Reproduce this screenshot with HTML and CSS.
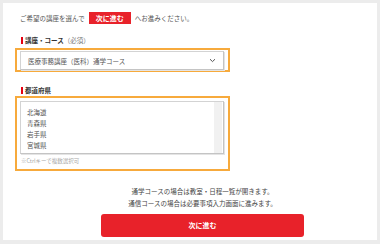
FILE: index.html
```html
<!DOCTYPE html>
<html>
    <head>
        <title>講座選択</title>
        <link rel="stylesheet" href="styles.css">
    </head>
    <body>
        <div class="panel">
            <p class="intro">
                <span>ご希望の講座を選んで</span>
                <span class="mini-btn">次に進む</span>
                <span>へお進みください。</span>
            </p>

            <h2 class="label">講座・コース<span class="req">（必須）</span></h2>
            <div class="field field-course">
                <div class="select">
                    <span>医療事務講座（医科）通学コース</span>
                    <svg class="chevron" width="7" height="5" viewBox="0 0 7 5">
                        <path d="M1 1.2 L3.5 3.6 L6 1.2" fill="none" stroke="#555" stroke-width="1"/>
                    </svg>
                </div>
            </div>

            <h2 class="label label-pref">都道府県</h2>
            <div class="field field-pref">
                <div class="listbox">
                    <ul class="options">
                        <li>北海道</li>
                        <li>青森県</li>
                        <li>岩手県</li>
                        <li>宮城県</li>
                    </ul>
                    <div class="track"></div>
                </div>
                <p class="note">※Ctrlキーで複数選択可</p>
            </div>

            <div class="submit">
                <p class="info">
                    通学コースの場合は教室・日程一覧が開きます。<br>
                    通信コースの場合は必要事項入力画面に進みます。
                </p>
                <div class="next-btn">次に進む</div>
            </div>
        </div>
    </body>
</html>
```

FILE: styles.css
```css
body {
    margin: 0;
    padding: 3px;
    background: #ececec;
    font-family: "Noto Sans CJK JP", "Noto Sans", sans-serif;
    color: #444;
}
.panel {
    background: #fff;
    width: 374px;
    height: 237px;
    padding-left: 12px;
    box-sizing: border-box;
    overflow: hidden;
}
.intro {
    display: flex;
    align-items: center;
    gap: 4px;
    margin: 0;
    padding-top: 9px;
    padding-left: 5px;
    font-size: 6.5px;
    line-height: 12px;
    color: #555;
}
.mini-btn {
    display: block;
    height: 12px;
    padding: 0 7px;
    background: #e8222a;
    color: #fff;
    font-weight: bold;
    font-size: 7px;
    line-height: 12px;
}
.label {
    display: flex;
    align-items: center;
    margin: 12px 0 0 6px;
    height: 8px;
    font-size: 6.5px;
    font-weight: bold;
    color: #333;
    line-height: 8px;
}
.label::before {
    content: "";
    display: block;
    width: 2px;
    height: 7px;
    margin-right: 2px;
    background: #e60012;
}
.req {
    font-weight: normal;
    color: #777;
}
.label-pref {
    margin-top: 14px;
}
.field {
    width: 215px;
    border: 2px solid #f7aa3c;
    box-sizing: border-box;
}
.field-course {
    margin-top: 4px;
    height: 24px;
    padding: 1px 4px 0 3px;
}
.select {
    display: flex;
    align-items: center;
    justify-content: space-between;
    height: 19px;
    box-sizing: border-box;
    padding: 0 7px 0 7px;
    border: 1px solid #d3d3d3;
    border-right-color: #c4c4c4;
    border-bottom-color: #c4c4c4;
    box-shadow: 1px 1px 0 #e4e4e4;
    font-size: 6.5px;
    color: #555;
}
.chevron {
    display: block;
}
.field-pref {
    margin-top: 2px;
    height: 75px;
    padding: 3px 4px 0 3px;
}
.listbox {
    display: flex;
    height: 53px;
    box-sizing: border-box;
    border: 1px solid #d3d3d3;
    border-right-color: #c4c4c4;
    border-bottom-color: #c4c4c4;
    box-shadow: 1px 1px 0 #e4e4e4;
}
.options {
    flex: 1;
    list-style: none;
    margin: 0;
    padding: 5px 0 0 6px;
    font-size: 6.5px;
    line-height: 11px;
    color: #555;
}
.track {
    width: 8px;
    margin-right: 1px;
    background: #f1f1f1;
}
.note {
    margin: 3px 0 0 1px;
    font-size: 5.5px;
    line-height: 8px;
    color: #aaa;
}
.submit {
    width: 203px;
    margin: 14px 0 0 86px;
    text-align: center;
}
.info {
    margin: 0;
    font-size: 6.5px;
    line-height: 12px;
    color: #444;
}
.next-btn {
    margin-top: 5px;
    height: 23px;
    border-radius: 3px;
    background: #e8222a;
    color: #fff;
    font-weight: bold;
    font-size: 7px;
    line-height: 23px;
}
```
